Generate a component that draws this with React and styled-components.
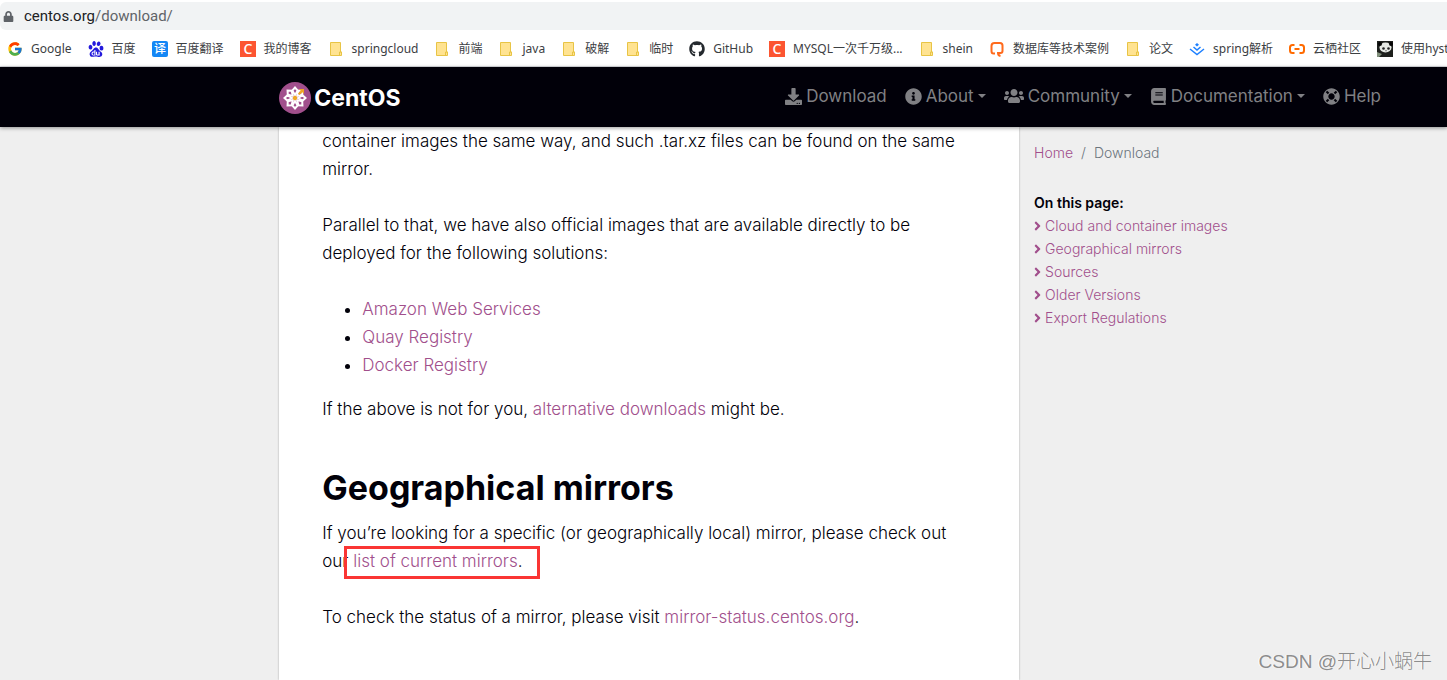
import React from 'react';
import styled, { createGlobalStyle } from 'styled-components';
import {
  FaLock,
  FaGithub,
  FaDownload,
  FaInfoCircle,
  FaUsers,
  FaBook,
  FaLifeRing,
  FaAngleRight,
} from 'react-icons/fa';
import { FcGoogle } from 'react-icons/fc';
import { SiBaidu } from 'react-icons/si';

const GlobalStyle = createGlobalStyle`
  * {
    box-sizing: border-box;
  }

  body {
    margin: 0;
    background: #efefef;
    color: #010009;
    font-family: Inter, 'Noto Sans', 'Noto Sans CJK SC', sans-serif;
    font-weight: 300;
  }
`;

const Page = styled.div`
  position: relative;
  display: flex;
  flex-direction: column;
  min-height: 100vh;
  overflow: hidden;
`;

const Browser = styled.div`
  padding-top: 2px;
  background: #fff;
  border-bottom: 1px solid #dadce0;
  font-family: 'Noto Sans', 'Noto Sans CJK SC', sans-serif;
  font-weight: 400;
`;

const AddressBar = styled.div`
  display: flex;
  align-items: center;
  gap: 10px;
  height: 28px;
  padding-left: 3px;
  background: #f1f3f4;
  border-radius: 6px 0 0 6px;
  color: #5f6368;
  font-family: Roboto, sans-serif;
  font-size: 15px;
`;

const Host = styled.span`
  color: #202124;
`;

const Bookmarks = styled.nav`
  display: flex;
  align-items: center;
  gap: 16px;
  height: 36px;
  padding: 2px 0 0 7px;
  overflow: hidden;
`;

const Bookmark = styled.a`
  display: flex;
  flex: none;
  align-items: center;
  gap: 8px;
  color: #3c4043;
  font-size: 12px;
  line-height: 16px;
  text-decoration: none;
  white-space: nowrap;

  svg {
    width: 16px;
    height: 16px;
  }
`;

const Header = styled.header`
  z-index: 1;
  display: flex;
  align-items: center;
  justify-content: space-between;
  height: 60px;
  padding: 0 66px 0 19.3%;
  background: #010009;
  box-shadow: 0 1px 4px rgba(0, 0, 0, 0.4);
`;

const Brand = styled.a`
  display: flex;
  align-items: center;
  gap: 3px;
  padding-top: 2px;
  color: #fff;
  font-size: 23px;
  font-weight: 700;
  text-decoration: none;
`;

const Menu = styled.nav`
  display: flex;
  gap: 18px;
  padding-bottom: 2px;
`;

const MenuLink = styled.a`
  display: flex;
  align-items: center;
  gap: 4px;
  color: #808084;
  font-size: 17px;
  font-weight: 400;
  line-height: 26px;
  text-decoration: none;
  white-space: nowrap;
`;

const Caret = styled.span`
  border-top: 4px solid;
  border-right: 4px solid transparent;
  border-left: 4px solid transparent;
`;

const Layout = styled.div`
  display: grid;
  flex: 1;
  grid-template-columns: 19.3% 740fr 428fr;
`;

const Article = styled.main`
  grid-column: 2;
  padding: 0 50px 0 43px;
  background: #fff;
  box-shadow: 0 0 2px rgba(0, 0, 0, 0.3);
  font-size: 17px;
  line-height: 28px;

  p {
    margin: 0 0 28px;
  }

  ul {
    margin: 0 0 16px;
    padding-left: 40px;
  }

  h2 {
    margin: 45px 0 11px;
    font-size: 34px;
    font-weight: 700;
    line-height: 40px;
  }
`;

const TextLink = styled.a`
  color: #a14f8c;
  text-decoration: none;
`;

const Marked = styled.span`
  position: relative;
  white-space: nowrap;

  &::after {
    position: absolute;
    inset: -5px -17px -8px -9px;
    border: 3px solid #fa3534;
    content: '';
  }
`;

const Sidebar = styled.aside`
  padding: 14px 15px;
  font-size: 14px;
  line-height: 23px;
`;

const Breadcrumb = styled.nav`
  display: flex;
  gap: 8px;
  margin-bottom: 27px;
  color: #6c757d;
`;

const Toc = styled.nav`
  display: flex;
  flex-direction: column;

  strong {
    font-weight: 600;
  }
`;

const TocLink = styled(TextLink)`
  display: flex;
  align-items: center;
  gap: 4px;

  svg {
    width: 7px;
  }
`;

const Watermark = styled.div`
  position: absolute;
  right: 15px;
  bottom: 5px;
  color: #8d8d8d;
  font-family: 'Liberation Sans', 'Noto Sans CJK SC', sans-serif;
  font-size: 19px;
  line-height: 26px;
  text-shadow: -1px 0 #fff;
`;

const FolderIcon = () => (
  <svg viewBox="0 0 16 16">
    <path d="M2.5 1.5h10v9.500h1v3.500h-11z" fill="#ffe391" stroke="#e8c445" />
    <path d="M11.500 14.500v-3.500h2" fill="none" stroke="#e8c445" />
  </svg>
);

const SquareIcon = ({ color, radius = 0, size, children }) => (
  <svg viewBox="0 0 16 16">
    <rect width="16" height="16" rx={radius} fill={color} />
    <text x="8" y={size > 12 ? 13 : 12} fill="#fff" fontSize={size} fontWeight="500" textAnchor="middle">
      {children}
    </text>
  </svg>
);

const BubbleIcon = () => (
  <svg viewBox="0 0 16 16" fill="none" stroke="#ff6a1c" strokeWidth="2">
    <path d="M6 12.500H4.500Q2.500 12.500 2.500 10V5Q2.500 2 5.500 2H11q2.500 0 2.500 2.500V10q0 2-2 2H9q0 2.500 2.500 3" />
  </svg>
);

const JuejinIcon = () => (
  <svg viewBox="0 0 16 16" fill="none" stroke="#1e80ff" strokeWidth="1.500">
    <path d="M1 8l7 5.500L15 8M4.500 6L8 9l3.500-3" />
    <path d="M8 2l2 1.800L8 5.500 6 3.800z" fill="#1e80ff" stroke="none" />
  </svg>
);

const AliyunIcon = () => (
  <svg viewBox="0 0 16 16" fill="none" stroke="#ff6a00" strokeWidth="2">
    <path d="M5.500 4H3.500Q1 4 1 6.500v3Q1 12 3.500 12h2M10.500 4h2Q15 4 15 6.500v3q0 2.500-2.500 2.500h-2M5.500 8h5" />
  </svg>
);

const PandaIcon = () => (
  <svg viewBox="0 0 16 16">
    <rect width="16" height="16" fill="#1d1f1c" />
    <ellipse cx="8.500" cy="6.500" rx="6" ry="5" fill="#e6e9e4" />
    <circle cx="3" cy="3" r="2" fill="#050505" />
    <circle cx="14" cy="3" r="2" fill="#050505" />
    <ellipse cx="6.500" cy="7.500" rx="1.300" ry="1.300" fill="#222" />
    <ellipse cx="11.500" cy="7.500" rx="1.300" ry="1.300" fill="#222" />
    <path d="M8 9.500h2l-1 1z" fill="#222" />
    <path d="M0 11l5 2-3 3H0z" fill="#81907c" />
  </svg>
);

const petals = [0, 45, 90, 135, 180, 225, 270, 315];

const CentosLogo = () => (
  <svg width="32" height="32" viewBox="-16 -16 32 32">
    <circle r="16" fill="#a14f8c" />
    {petals.map((angle) => (
      <path
        key={angle}
        d="M0-3L-2.700-7.500 0-10.500 2.700-7.500z"
        transform={`rotate(${angle})`}
        fill="none"
        stroke="#fff"
        strokeWidth="2"
      />
    ))}
    <path d="M4-9H9V-4L7.300-5.700 4.500-3 3-4.500 5.700-7.300z" fill="#efa724" />
    <circle r="2.200" fill="#efa724" />
  </svg>
);

const bookmarks = [
  { name: 'Google', icon: <FcGoogle /> },
  { name: '百度', icon: <SiBaidu color="#2319dc" /> },
  { name: '百度翻译', icon: <SquareIcon color="#1487f5" radius={2} size={12}>译</SquareIcon> },
  { name: '我的博客', icon: <SquareIcon color="#fc5531" size={14}>C</SquareIcon> },
  { name: 'springcloud', icon: <FolderIcon /> },
  { name: '前端', icon: <FolderIcon /> },
  { name: 'java', icon: <FolderIcon /> },
  { name: '破解', icon: <FolderIcon /> },
  { name: '临时', icon: <FolderIcon /> },
  { name: 'GitHub', icon: <FaGithub color="#24292e" /> },
  { name: 'MYSQL一次千万级...', icon: <SquareIcon color="#fc5531" size={14}>C</SquareIcon> },
  { name: 'shein', icon: <FolderIcon /> },
  { name: '数据库等技术案例', icon: <BubbleIcon /> },
  { name: '论文', icon: <FolderIcon /> },
  { name: 'spring解析', icon: <JuejinIcon /> },
  { name: '云栖社区', icon: <AliyunIcon /> },
  { name: '使用hystrix', icon: <PandaIcon /> },
];

const menu = [
  { name: 'Download', icon: <FaDownload /> },
  { name: 'About', icon: <FaInfoCircle />, dropdown: true },
  { name: 'Community', icon: <FaUsers size={20} />, dropdown: true },
  { name: 'Documentation', icon: <FaBook />, dropdown: true },
  { name: 'Help', icon: <FaLifeRing /> },
];

const sections = [
  'Cloud and container images',
  'Geographical mirrors',
  'Sources',
  'Older Versions',
  'Export Regulations',
];

const App = () => (
  <Page>
    <GlobalStyle />
    <Browser>
      <AddressBar>
        <FaLock size={11} />
        <span>
          <Host>centos.org</Host>/download/
        </span>
      </AddressBar>
      <Bookmarks>
        {bookmarks.map(({ name, icon }) => (
          <Bookmark key={name} href="#">
            {icon}
            {name}
          </Bookmark>
        ))}
      </Bookmarks>
    </Browser>

    <Header>
      <Brand href="#">
        <CentosLogo />
        CentOS
      </Brand>
      <Menu>
        {menu.map(({ name, icon, dropdown }) => (
          <MenuLink key={name} href="#">
            {icon}
            {name}
            {dropdown && <Caret />}
          </MenuLink>
        ))}
      </Menu>
    </Header>

    <Layout>
      <Article>
        <p>
          container images the same way, and such .tar.xz files can be found on the same mirror.
        </p>
        <p>
          Parallel to that, we have also official images that are available directly to be deployed
          for the following solutions:
        </p>
        <ul>
          <li><TextLink href="#">Amazon Web Services</TextLink></li>
          <li><TextLink href="#">Quay Registry</TextLink></li>
          <li><TextLink href="#">Docker Registry</TextLink></li>
        </ul>
        <p>
          If the above is not for you, <TextLink href="#">alternative downloads</TextLink> might be.
        </p>
        <h2>Geographical mirrors</h2>
        <p>
          If you’re looking for a specific (or geographically local) mirror, please check out
          our <Marked><TextLink href="#">list of current mirrors</TextLink>.</Marked>
        </p>
        <p>
          To check the status of a mirror, please visit{' '}
          <TextLink href="#">mirror-status.centos.org</TextLink>.
        </p>
      </Article>
      <Sidebar>
        <Breadcrumb>
          <TextLink href="#">Home</TextLink>
          <span>/</span>
          <span>Download</span>
        </Breadcrumb>
        <Toc>
          <strong>On this page:</strong>
          {sections.map((name) => (
            <TocLink key={name} href="#">
              <FaAngleRight />
              {name}
            </TocLink>
          ))}
        </Toc>
      </Sidebar>
    </Layout>
    <Watermark>CSDN @开心小蜗牛</Watermark>
  </Page>
);

export default App;
